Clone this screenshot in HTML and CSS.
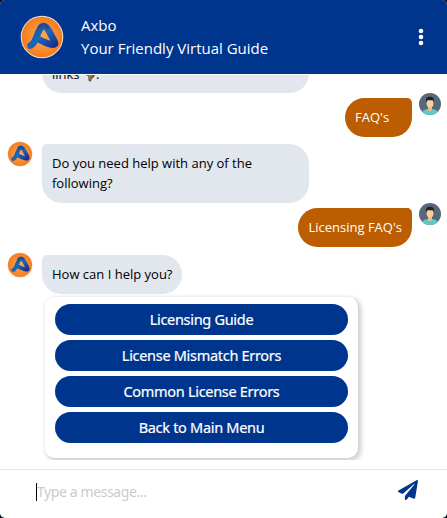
FILE: index.html
```html
<!DOCTYPE html>
<html lang="en">
<head>
<meta charset="utf-8">
<title>Axbo</title>
<link rel="stylesheet" href="styles.css">
</head>
<body>
<svg class="defs" aria-hidden="true">
  <defs>
    <radialGradient id="orange"><stop offset="0" stop-color="#ffad50"/><stop offset="1" stop-color="#f27c20"/></radialGradient>
    <linearGradient id="blue" x1="0" y1="0" x2="1" y2="1"><stop offset="0" stop-color="#234b91"/><stop offset=".5" stop-color="#1769bd"/><stop offset="1" stop-color="#1c2c91"/></linearGradient>
    <clipPath id="round"><circle cx="11" cy="11" r="11"/></clipPath>
  </defs>
  <symbol id="bot" viewBox="0 0 44 44">
    <circle cx="22" cy="22" r="21.300" fill="#f6ddca"/>
    <circle cx="22" cy="22" r="20.300" fill="url(#orange)"/>
    <path d="M10.500 30.500C17 28 17 15 22 11.500C24.500 10 27 12 29 16L34.500 26.500C37 32 30 30 19 24.500" fill="none" stroke="url(#blue)" stroke-width="6.600" stroke-linecap="round" stroke-linejoin="round"/>
    <path d="M19 12C21 8.500 26 9 27.500 13" fill="none" stroke="#2d438a" stroke-width="2.500" stroke-linecap="round"/>
  </symbol>
  <symbol id="person" viewBox="0 0 22 22">
    <g clip-path="url(#round)">
      <path d="M0 0h22v22H0z" fill="#58677a"/>
      <path d="M2.500 22c0-4 2.500-5.500 6.500-6h4c4 .5 6.500 2 6.500 6z" fill="#5bcac9"/>
      <path d="M9 11h4v5.500c0 2.500-4 2.500-4 0z" fill="#eabd8b"/>
      <ellipse cx="11" cy="10" rx="3.500" ry="4.500" fill="#f7d09f"/>
      <path d="M7.200 9.500C6.300 5.500 8 3.800 11 3.800S15.700 5.500 14.800 9.500L13.800 7.300H8.500z" fill="#241f20"/>
    </g>
  </symbol>
</svg>
<main class="chat">
  <header class="header">
    <svg class="logo"><use href="#bot"/></svg>
    <div class="title"><div>Axbo</div><div>Your Friendly Virtual Guide</div></div>
    <svg class="menu" viewBox="0 0 6 18"><circle cx="3" cy="3" r="2.300"/><circle cx="3" cy="9" r="2.300"/><circle cx="3" cy="15" r="2.300"/></svg>
  </header>
  <section class="messages">
    <div class="row bot first"><svg class="avatar"></svg><div class="bubble wide">links <svg class="hand" viewBox="0 0 13 15"><path d="M2 2h9v7l-1.500 2H8v2.500q-1 1.200-2 0V9L2 7z" fill="#eda91f" stroke="#4b3921"/><path d="M8 6v5M10 6v4" stroke="#4b3921"/></svg>:</div></div>
    <div class="row user"><div class="bubble faq">FAQ's</div><svg class="person"><use href="#person"/></svg></div>
    <div class="row bot"><svg class="avatar"><use href="#bot"/></svg><div class="bubble wide">Do you need help with any of the following?</div></div>
    <div class="row user licensing"><div class="bubble">Licensing FAQ's</div><svg class="person"><use href="#person"/></svg></div>
    <div class="row bot last"><svg class="avatar"><use href="#bot"/></svg><div class="bubble">How can I help you?</div></div>
    <div class="card">
      <button>Licensing Guide</button>
      <button>License Mismatch Errors</button>
      <button>Common License Errors</button>
      <button>Back to Main Menu</button>
    </div>
  </section>
  <footer class="composer">
    <span class="caret"></span><span class="placeholder">Type a message...</span>
    <svg class="send" viewBox="0 0 512 512"><path d="M476 3.200L12.500 270.600c-18.100 10.400-15.800 35.600 2.200 43.200L121 358.400l287.300-253.200c5.500-4.900 13.300 2.600 8.600 8.300L176 407v80.500c0 23.600 28.500 32.900 42.500 15.800L282 426l124.600 52.200c14.200 6 30.400-2.900 33-18.200l72-432C515 7.800 493.300-6.800 476 3.200z"/></svg>
  </footer>
</main>
</body>
</html>
```

FILE: styles.css
```css
* { box-sizing: border-box; }
body { margin: 0; background: #020b20; font: 13px/20px "Open Sans", sans-serif; }
.defs { position: absolute; width: 0; height: 0; }
.chat { width: 447px; height: 518px; display: flex; flex-direction: column; overflow: hidden; background: #fff; border-radius: 5px; }
.header { height: 74px; flex: none; display: flex; align-items: center; padding: 0 23px 0 20px; background: #00358e; color: #fff; }
.logo { width: 44px; height: 44px; }
.title { margin-left: 17px; flex: 1; font-size: 15px; line-height: 23px; }
.menu { width: 6px; height: 18px; fill: #fff; }
.messages { height: 385px; margin-top: 1px; flex: none; overflow: hidden; display: flex; flex-direction: column; justify-content: flex-end; padding-bottom: 2px; }
.row { display: flex; align-items: flex-start; flex: none; }
.avatar { width: 26px; height: 26px; margin: -3px 9px 0 7px; flex: none; }
.bubble { padding: 9px 10px 10px; background: #e2e6ed; color: #000; border-radius: 5px 20px 20px 20px; }
.wide { width: 267px; }
.first { margin-bottom: 5px; }
.first .bubble { padding: 10px 10px 9px; }
.user { justify-content: flex-end; padding-right: 6px; margin-bottom: 7px; }
.user .bubble { background: #bb5d00; color: #fff; border-radius: 20px 5px 20px 20px; }
.user .faq { width: 67px; }
.person { width: 22px; height: 22px; margin: -5px 0 0 7px; }
.row.licensing { margin: 5px 0 8px; }
.last { margin-bottom: 3px; }
.hand { width: 13px; height: 15px; vertical-align: -3px; }
.card { width: 313px; height: 161px; flex: none; margin-left: 45px; padding: 7px 10px; display: flex; flex-direction: column; gap: 5px; border-radius: 10px; background: #fff; box-shadow: 2px 2px 5px 1px #0003; }
.card button { height: 31px; border: 0; padding: 0; border-radius: 16px; background: #00358e; color: #fff; font: 14.500px/31px "Noto Sans", sans-serif; letter-spacing: -.3px; -webkit-text-stroke: .2px #fff; }
.composer { height: 49px; margin-top: 9px; border-top: 1px solid #e3e5ea; display: flex; align-items: flex-start; padding-left: 36px; }
.caret { width: 1px; height: 18px; margin-top: 13px; background: #000; }
.placeholder { flex: 1; margin-top: 12px; color: #cbcbcb; font: 14px/20px "Noto Sans", sans-serif; letter-spacing: -.4px; }
.send { width: 20px; height: 20px; margin: 10px 29px 0 0; fill: #00358e; }
```
